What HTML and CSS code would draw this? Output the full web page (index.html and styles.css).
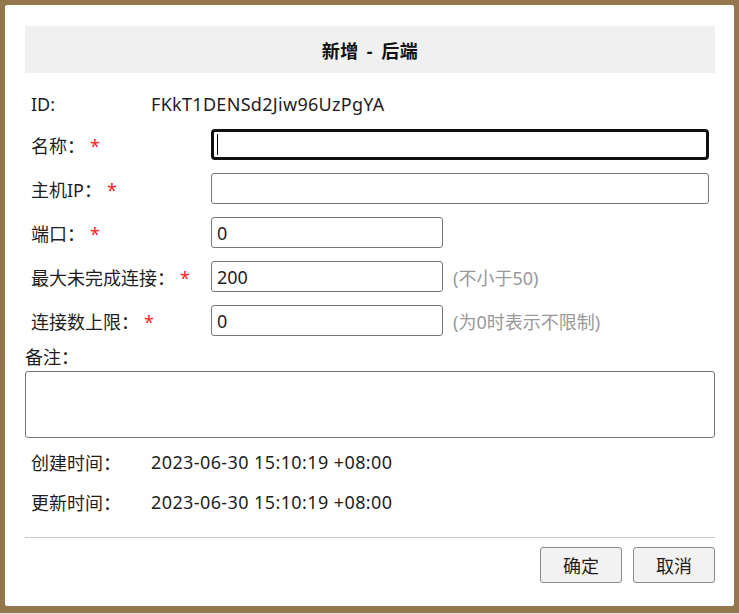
FILE: index.html
```html
<!DOCTYPE html>
<html lang="zh-CN">
<head>
<meta charset="utf-8">
<title>新增 - 后端</title>
<link rel="stylesheet" href="styles.css">
</head>
<body>
<div class="frame">
  <div class="panel">
    <div class="header">新增 - 后端</div>
    <div class="fields">
      <div class="row row-id">
        <span class="label label-short">ID:</span>
        <span class="value">FKkT1DENSd2Jiw96UzPgYA</span>
      </div>
      <div class="row">
        <span class="label label-long">名称：<span class="req">*</span></span>
        <span class="input-wrap input-full">
          <input class="input focused" type="text" value="">
          <span class="caret"></span>
        </span>
      </div>
      <div class="row">
        <span class="label label-long">主机IP：<span class="req">*</span></span>
        <span class="input-wrap input-full"><input class="input" type="text" value=""></span>
      </div>
      <div class="row">
        <span class="label label-long">端口：<span class="req">*</span></span>
        <span class="input-wrap input-short"><input class="input" type="text" value="0"></span>
      </div>
      <div class="row">
        <span class="label label-long">最大未完成连接：<span class="req">*</span></span>
        <span class="input-wrap input-short"><input class="input" type="text" value="200"></span>
        <span class="hint">(不小于50)</span>
      </div>
      <div class="row">
        <span class="label label-long">连接数上限：<span class="req">*</span></span>
        <span class="input-wrap input-short"><input class="input" type="text" value="0"></span>
        <span class="hint">(为0时表示不限制)</span>
      </div>
    </div>
    <div class="remark-label">备注：</div>
    <textarea class="remark"></textarea>
    <div class="times">
      <div class="time-row">
        <span class="label label-short">创建时间：</span>
        <span class="value value-date">2023-06-30 15:10:19 +08:00</span>
      </div>
      <div class="time-row">
        <span class="label label-short">更新时间：</span>
        <span class="value value-date">2023-06-30 15:10:19 +08:00</span>
      </div>
    </div>
    <div class="divider"></div>
    <div class="actions">
      <button class="btn" type="button">确定</button>
      <button class="btn" type="button">取消</button>
    </div>
  </div>
</div>
</body>
</html>
```
FILE: styles.css
```css
html, body {
  margin: 0;
  padding: 0;
}
body {
  width: 739px;
  height: 614px;
  background: #e9e6e0;
  font-family: "Noto Sans", "Noto Sans CJK SC", sans-serif;
  font-size: 18px;
  color: #1e1e1e;
  overflow: hidden;
}
.frame {
  box-sizing: border-box;
  width: 739px;
  height: 613px;
  background: #94764d;
  padding: 5px 5px 7px 5px;
}
.panel {
  box-sizing: border-box;
  height: 601px;
  background: #ffffff;
  border-radius: 2px;
  padding: 21px 19px 0 20px;
  display: flex;
  flex-direction: column;
}
.header {
  height: 47px;
  background: #f0f0f0;
  display: flex;
  align-items: center;
  justify-content: center;
  font-weight: bold;
  font-size: 18px;
  word-spacing: 3px;
  letter-spacing: 0.5px;
  color: #111;
  flex-shrink: 0;
}
.fields {
  display: flex;
  flex-direction: column;
  gap: 13px;
  margin-top: 15px;
}
.row {
  display: flex;
  align-items: center;
  height: 31px;
  padding-left: 6px;
}
.row-id {
  margin-bottom: -3px;
}
.label {
  flex-shrink: 0;
  white-space: nowrap;
}
.label-short {
  width: 120px;
}
.label-long {
  width: 180px;
}
.req {
  color: #ff2020;
  margin-left: 5px;
}
.value {
  white-space: nowrap;
  letter-spacing: 0.3px;
}
.value-date {
  letter-spacing: 0.4px;
}
.input-wrap {
  position: relative;
  display: block;
  height: 31px;
}
.input-full {
  width: 498px;
}
.input-short {
  width: 232px;
}
.input {
  box-sizing: border-box;
  width: 100%;
  height: 31px;
  margin: 0;
  border: 1px solid #767676;
  border-radius: 3px;
  padding: 0 5px;
  font-family: "Noto Sans", "Noto Sans CJK SC", sans-serif;
  font-size: 18px;
  color: #1e1e1e;
  background: #fff;
  outline: none;
}
.input.focused {
  border: 3px solid #101010;
  border-radius: 4px;
  padding-left: 3px;
}
.caret {
  position: absolute;
  left: 6px;
  top: 5px;
  width: 1px;
  height: 21px;
  background: #000;
}
.hint {
  margin-left: 10px;
  color: #999;
  white-space: nowrap;
}
.remark-label {
  margin-top: 9px;
  height: 24px;
  line-height: 24px;
}
.remark {
  box-sizing: border-box;
  display: block;
  width: 690px;
  height: 67px;
  margin: 2px 0 0 0;
  border: 1px solid #767676;
  border-radius: 3px;
  resize: none;
  font-family: "Noto Sans", "Noto Sans CJK SC", sans-serif;
  font-size: 18px;
  outline: none;
}
.times {
  display: flex;
  flex-direction: column;
  margin-top: 4px;
}
.time-row {
  display: flex;
  align-items: center;
  height: 40px;
  padding-left: 6px;
}
.divider {
  height: 1px;
  background: #c8c8c8;
  margin-top: 15px;
  width: 690px;
}
.actions {
  display: flex;
  justify-content: flex-end;
  gap: 11px;
  margin-top: 9px;
  width: 690px;
}
.btn {
  box-sizing: border-box;
  width: 82px;
  height: 36px;
  margin: 0;
  border: 1px solid #8a8a8a;
  border-radius: 3px;
  background: #f2f2f2;
  font-family: "Noto Sans", "Noto Sans CJK SC", sans-serif;
  font-size: 18px;
  color: #1e1e1e;
  padding: 0;
}
```
